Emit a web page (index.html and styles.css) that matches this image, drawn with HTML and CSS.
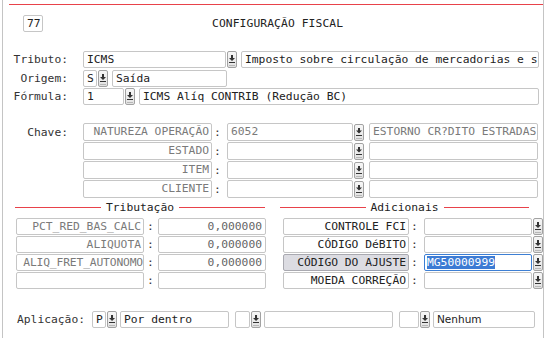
FILE: index.html
```html
<!DOCTYPE html>
<html lang="pt-BR">
<head>
    <meta charset="UTF-8">
    <title>Configuração Fiscal</title>
    <link rel="stylesheet" href="styles.css">
</head>
<body>
<div class="screen">
    <div class="topline"></div>

    <div class="head">
        <div class="box code">77</div>
        <div class="title">CONFIGURAÇÃO FISCAL</div>
    </div>

    <div class="form">
        <div class="row">
            <span class="lbl">Tributo:</span>
            <div class="box w143">ICMS</div>
            <span class="btn"></span>
            <div class="box w298 ml4">Imposto sobre circulação de mercadorias e s</div>
        </div>
        <div class="row row-origem">
            <span class="lbl">Origem:</span>
            <div class="box w14">S</div>
            <span class="btn"></span>
            <div class="box w115 ml4">Saída</div>
        </div>
        <div class="row">
            <span class="lbl">Fórmula:</span>
            <div class="box w41">1</div>
            <span class="btn"></span>
            <div class="box w400 ml4">ICMS Alíq CONTRIB (Redução BC)</div>
        </div>
    </div>

    <div class="chave">
        <div class="row">
            <span class="lbl">Chave:</span>
            <div class="box key w129">NATUREZA OPERAÇÃO</div>
            <span class="colon">:</span>
            <div class="box grey w126">6052</div>
            <span class="btn"></span>
            <div class="box grey w169 ml5">ESTORNO CR?DITO ESTRADAS</div>
        </div>
        <div class="row">
            <span class="lbl"></span>
            <div class="box key w129">ESTADO</div>
            <span class="colon">:</span>
            <div class="box w126"></div>
            <span class="btn"></span>
            <div class="box w169 ml5"></div>
        </div>
        <div class="row">
            <span class="lbl"></span>
            <div class="box key w129">ITEM</div>
            <span class="colon">:</span>
            <div class="box w126"></div>
            <span class="btn"></span>
            <div class="box w169 ml5"></div>
        </div>
        <div class="row">
            <span class="lbl"></span>
            <div class="box key w129">CLIENTE</div>
            <span class="colon">:</span>
            <div class="box w126"></div>
            <span class="btn"></span>
            <div class="box w169 ml5"></div>
        </div>
    </div>

    <div class="sections">
        <div class="col col-trib">
            <div class="sec-title"><span>Tributação</span></div>
            <div class="row">
                <div class="box key w128">PCT_RED_BAS_CALC</div>
                <span class="colon c-trib">:</span>
                <div class="box num w108">0,000000</div>
            </div>
            <div class="row">
                <div class="box key w128">ALIQUOTA</div>
                <span class="colon c-trib">:</span>
                <div class="box num w108">0,000000</div>
            </div>
            <div class="row">
                <div class="box key w128 tight">ALIQ_FRET_AUTONOMO</div>
                <span class="colon c-trib">:</span>
                <div class="box num w108">0,000000</div>
            </div>
            <div class="row">
                <div class="box key w128"></div>
                <span class="colon c-trib">:</span>
                <div class="box num w108"></div>
            </div>
        </div>

        <div class="col col-adic">
            <div class="sec-title"><span>Adicionais</span></div>
            <div class="row">
                <div class="box key dark w126">CONTROLE FCI</div>
                <span class="colon">:</span>
                <div class="box w108"></div>
                <span class="btn"></span>
            </div>
            <div class="row">
                <div class="box key dark w126">CÓDIGO DéBITO</div>
                <span class="colon">:</span>
                <div class="box w108"></div>
                <span class="btn"></span>
            </div>
            <div class="row">
                <div class="box key dark current w126">CÓDIGO DO AJUSTE</div>
                <span class="colon">:</span>
                <div class="box focus w108"><span class="sel">MG50000999</span></div>
                <span class="btn"></span>
            </div>
            <div class="row">
                <div class="box key dark w126">MOEDA CORREÇÃO</div>
                <span class="colon">:</span>
                <div class="box w108"></div>
                <span class="btn"></span>
            </div>
        </div>
    </div>

    <div class="row aplic">
        <span class="lbl-aplic">Aplicação:</span>
        <div class="box w14">P</div>
        <span class="btn"></span>
        <div class="box w109 ml3">Por dentro</div>
        <div class="box w15 ml6"></div>
        <span class="btn"></span>
        <div class="box w129 ml3"></div>
        <div class="box w20 ml6"></div>
        <span class="btn"></span>
        <div class="box w102 ml3 sans">Nenhum</div>
    </div>
</div>
</body>
</html>
```

FILE: styles.css
```css
html, body {
    margin: 0;
    background: #ffffff;
}
body {
    font-family: "DejaVu Sans Mono", "Liberation Mono", monospace;
    font-size: 11.3px;
    color: #222;
}
.screen {
    margin-left: 2px;
    width: 540px;
    height: 338px;
    border-left: 1px solid #c4c4c4;
    border-right: 1px solid #c4c4c4;
    overflow: hidden;
}
.topline {
    margin: 4px 0 0 6px;
    height: 1px;
    background: #e8424a;
}

.head {
    display: flex;
    align-items: center;
    margin-top: 10px;
    padding-left: 20px;
}
.code {
    width: 20px;
    height: 18px;
}
.title {
    margin-left: 169px;
    letter-spacing: 0.1px;
}

.row {
    display: flex;
    align-items: center;
    height: 17px;
}
.box {
    box-sizing: border-box;
    height: 17px;
    border: 1px solid #c6c6c6;
    border-radius: 2px;
    padding: 0 3px;
    line-height: 15px;
    white-space: nowrap;
    overflow: hidden;
    background: #fff;
    flex: none;
}
.btn {
    position: relative;
    box-sizing: border-box;
    width: 10px;
    height: 17px;
    margin-left: 1px;
    border: 1px solid #a2a2a2;
    border-radius: 2px;
    background: linear-gradient(#f7f7f7, #e2e2e2);
    flex: none;
}
.btn::before {
    content: "";
    position: absolute;
    left: 1px;
    top: 3px;
    width: 6px;
    height: 6px;
    background: #333;
    clip-path: polygon(33% 0, 67% 0, 67% 50%, 100% 50%, 50% 100%, 0 50%, 33% 50%);
}
.btn::after {
    content: "";
    position: absolute;
    left: 1px;
    top: 10px;
    width: 6px;
    height: 1px;
    background: #333;
    box-shadow: 0 3px 0 #b8b8b8;
}

.lbl {
    width: 65px;
    margin-right: 15px;
    text-align: right;
    color: #333;
    flex: none;
}
.form {
    margin-top: 19px;
}
.form .row + .row {
    margin-top: 2px;
}
.form .row-origem + .row {
    margin-top: 1px;
}

.chave {
    margin-top: 18px;
}
.chave .row {
    height: 18px;
    margin-bottom: 1px;
}
.chave .box {
    height: 18px;
    line-height: 16px;
}

.key {
    text-align: right;
    color: #7a7a7a;
    padding: 0 2px;
}
.grey {
    color: #7a7a7a;
}
.dark {
    color: #222;
}
.tight {
    padding: 0;
    letter-spacing: -0.15px;
}
.num {
    text-align: right;
    color: #666;
}
.colon {
    width: 15px;
    padding-left: 2px;
    box-sizing: border-box;
    flex: none;
    color: #333;
}
.c-trib {
    width: 14px;
    padding-left: 3px;
}

.sections {
    display: flex;
    margin-top: 3px;
}
.col-trib {
    margin-left: 12px;
    width: 251px;
}
.col-adic {
    margin-left: 14px;
    width: 262px;
}
.sec-title {
    display: flex;
    align-items: center;
    height: 13px;
    margin-bottom: 4px;
    width: 250px;
}
.col-trib .sec-title {
    margin-left: 0;
}
.col-adic .sec-title {
    width: 249px;
}
.col-adic .row {
    padding-left: 3px;
}
.col-trib .row {
    padding-left: 1px;
}
.sec-title::before,
.sec-title::after {
    content: "";
    flex: 1;
    height: 1px;
    background: #e8424a;
}
.sec-title span {
    padding: 0 5px;
    color: #222;
}
.col .row + .row {
    margin-top: 1px;
}

.current {
    background: #dcdce2;
    border-color: #a9a9b0;
}
.focus {
    border-color: #3d7fd4;
    padding: 0 2px;
}
.sel {
    background: #3c7bd4;
    color: #fff;
}

.aplic {
    margin-top: 22px;
    padding-left: 14px;
}
.lbl-aplic {
    margin-right: 7px;
    color: #333;
    flex: none;
}
.sans {
    font-family: "DejaVu Sans", Verdana, sans-serif;
    font-size: 10.5px;
}

.ml3 { margin-left: 3px; }
.ml4 { margin-left: 4px; }
.ml5 { margin-left: 5px; }
.ml6 { margin-left: 6px; }
.w14 { width: 14px; }
.w15 { width: 15px; }
.w20 { width: 20px; }
.w41 { width: 41px; }
.w102 { width: 102px; }
.w108 { width: 108px; }
.w109 { width: 109px; }
.w115 { width: 115px; }
.w126 { width: 126px; }
.w128 { width: 128px; }
.w129 { width: 129px; }
.w143 { width: 143px; }
.w169 { width: 169px; }
.w298 { width: 298px; }
.w400 { width: 400px; }
```
